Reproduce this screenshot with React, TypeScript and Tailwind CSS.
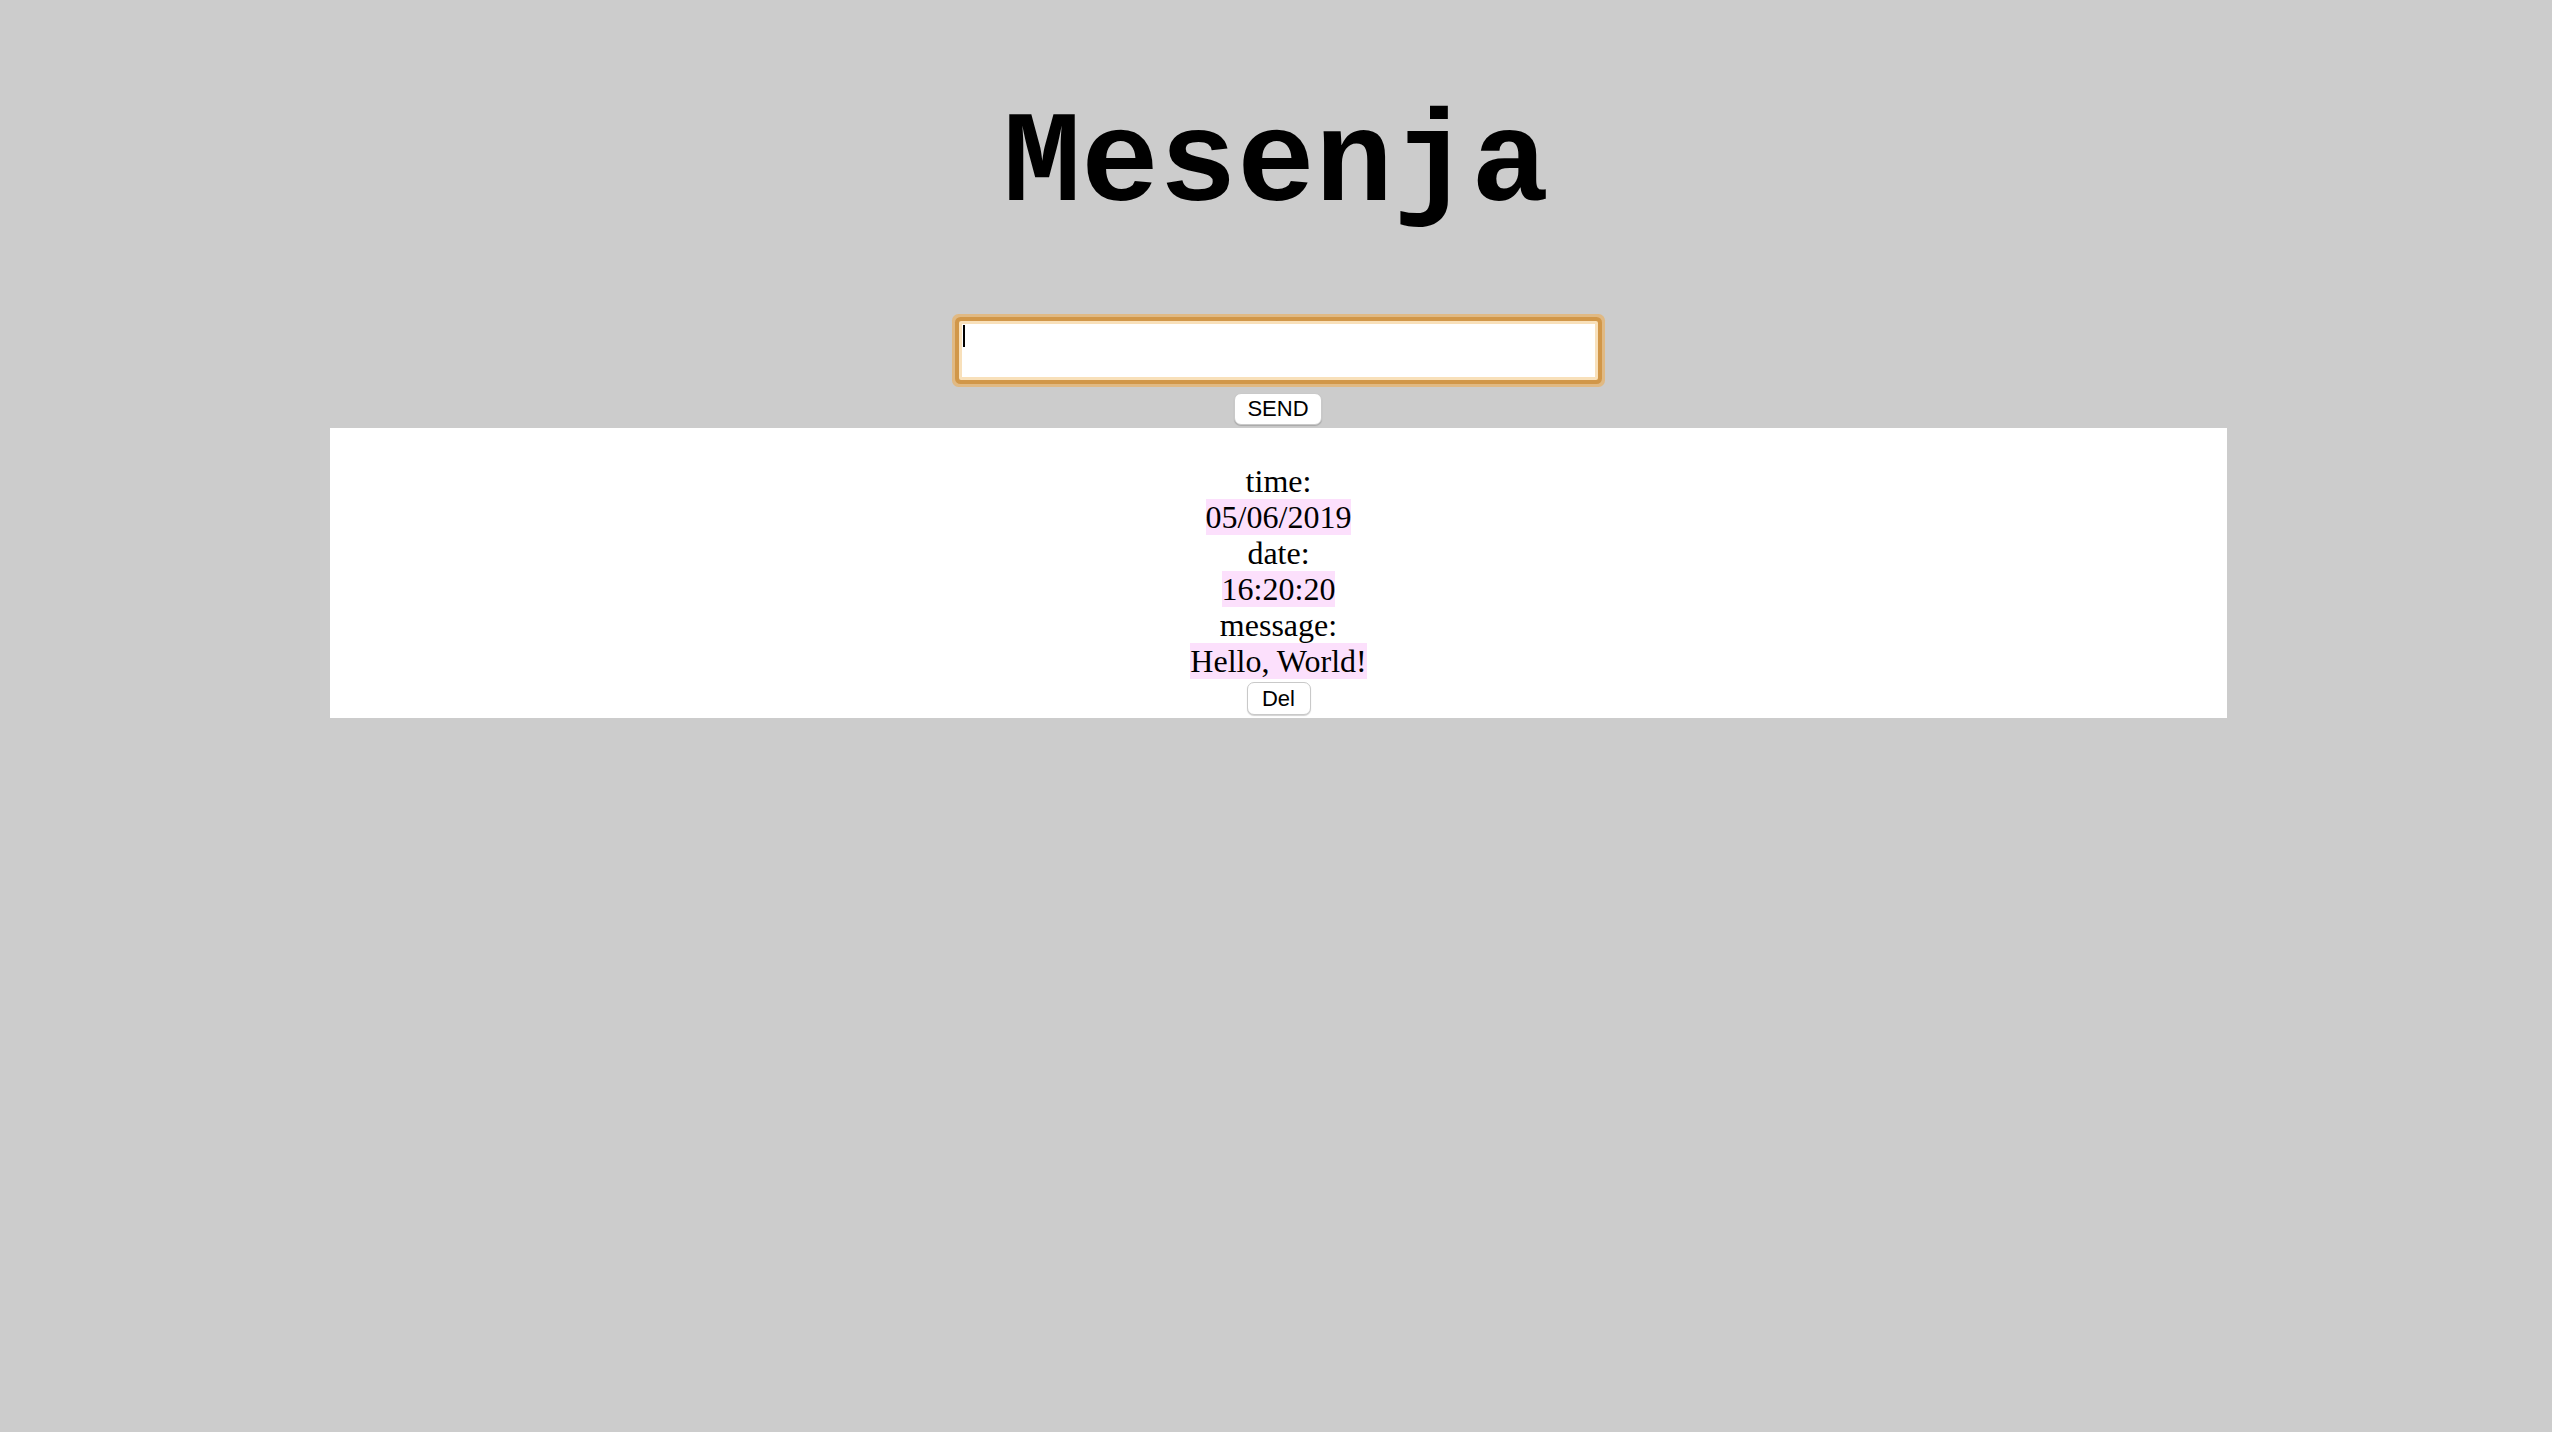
import React from "react";

export default function App() {
  const serif = "font-['Liberation_Serif',_'Times_New_Roman',serif]";
  return (
    <div className="min-h-[1432px] w-full bg-[#cccccc] pt-[102px]">
      <h1 className="m-0 text-center font-['Liberation_Mono',_'Courier_New',monospace] text-[130px] font-bold leading-[128px] text-black">
        Mesenja
      </h1>
      <div className="mt-[91px] flex flex-col items-center pl-[4px]">
        <div className="relative">
          <input
            type="text"
            className="block h-[59px] w-[639px] rounded-[2px] border-[3px] border-[#f8e0ba] bg-white px-[2px] font-['Liberation_Sans',Arial,sans-serif] text-[26px] text-black shadow-[0_0_0_4px_#d19749,0_0_0_7px_#e0b983] outline-none"
          />
          <span className="pointer-events-none absolute left-[4px] top-[4px] h-[22px] w-[2px] bg-black" />
        </div>
        <button className="mt-[13px] flex h-[32px] w-[88px] items-center justify-center rounded-[7px] border border-[#c9c9c9] bg-white font-['Liberation_Sans',Arial,sans-serif] text-[22px] leading-none text-black shadow-[0_1px_1px_rgba(0,0,0,0.18)]">
          SEND
        </button>
      </div>
      <div className={`ml-[330px] mt-[3px] flex w-[1897px] flex-col items-center bg-white pb-[2px] pt-[35px] ${serif} text-[32px] leading-[36px] text-black`}>
        <div>time:</div>
        <div>
          <span className="bg-[#fce0fc]">05/06/2019</span>
        </div>
        <div>date:</div>
        <div>
          <span className="bg-[#fce0fc]">16:20:20</span>
        </div>
        <div>message:</div>
        <div>
          <span className="bg-[#fce0fc]">Hello, World!</span>
        </div>
        <button className="mt-[3px] mb-[1px] flex h-[33px] w-[64px] items-center justify-center rounded-[7px] border border-[#c9c9c9] bg-white font-['Liberation_Sans',Arial,sans-serif] text-[22px] leading-none text-black shadow-[0_1px_1px_rgba(0,0,0,0.18)]">
          Del
        </button>
      </div>
    </div>
  );
}
